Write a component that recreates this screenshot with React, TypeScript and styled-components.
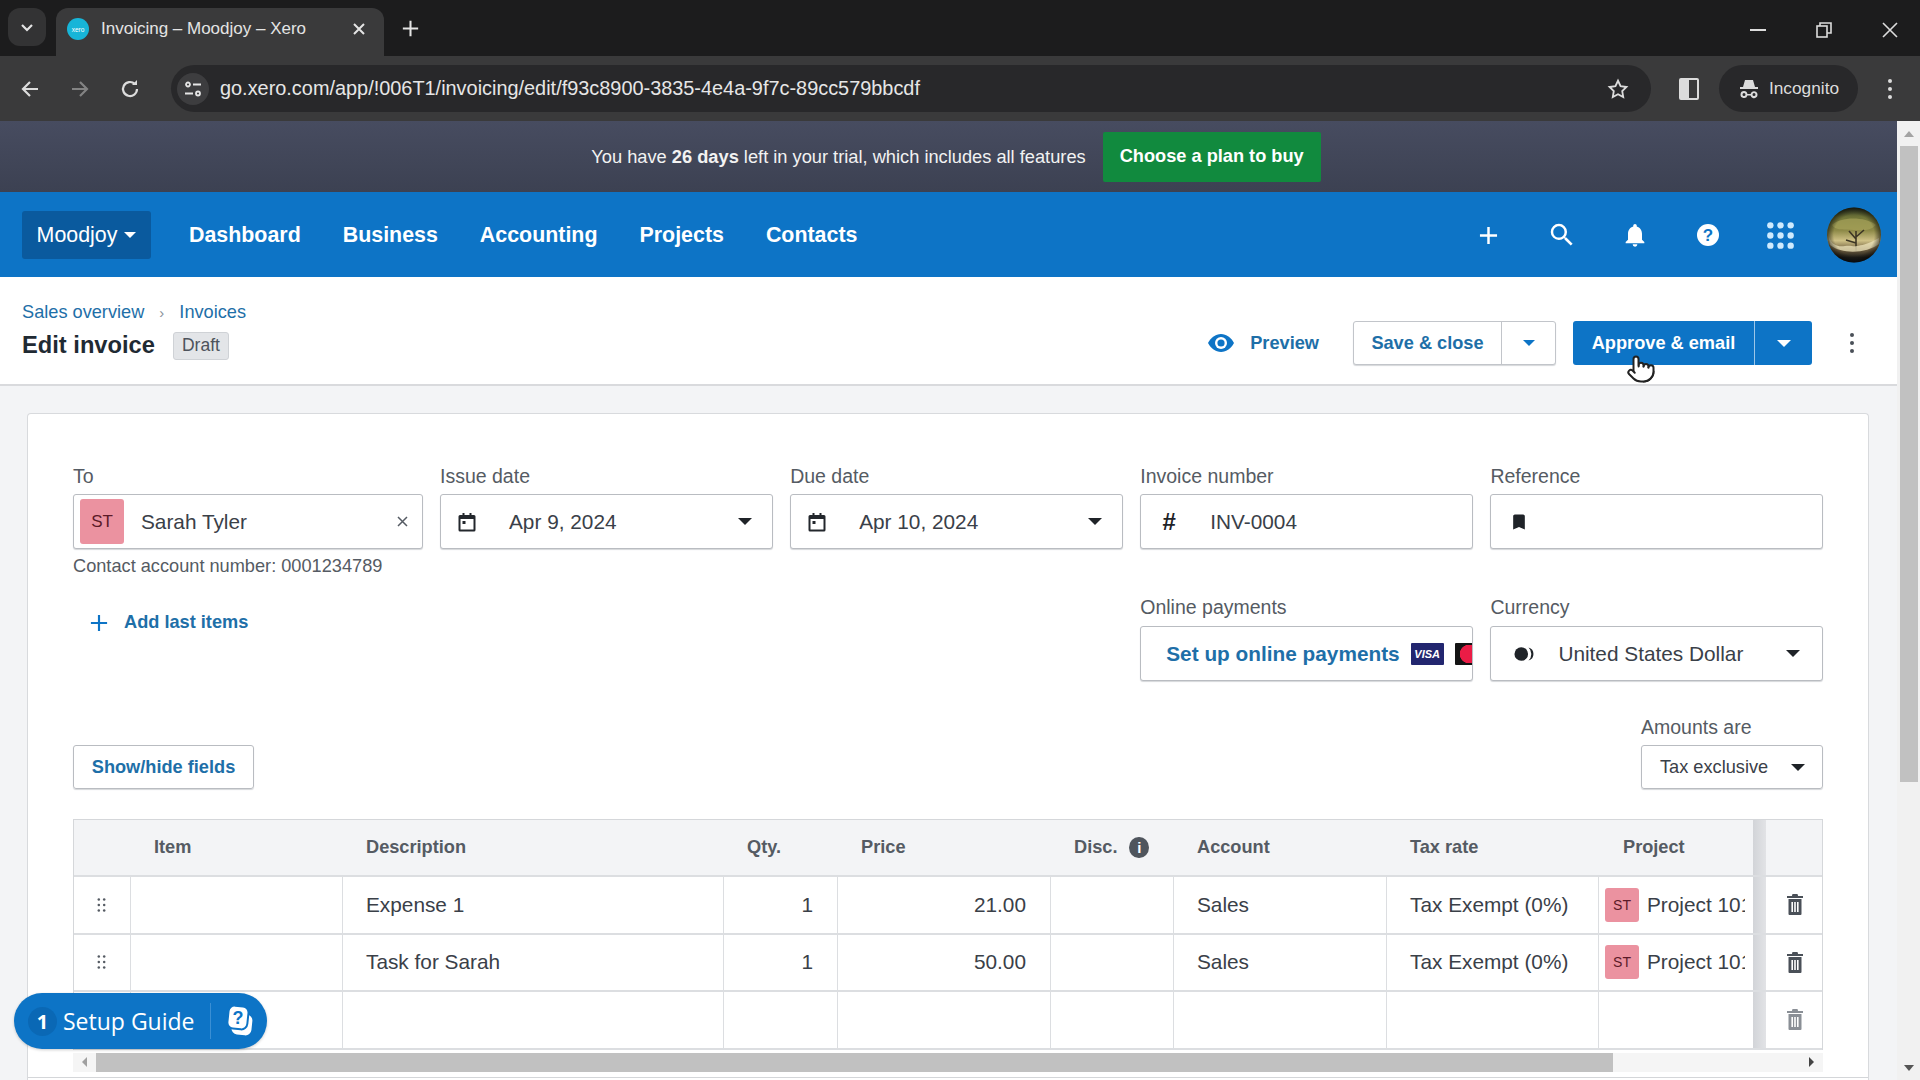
import React from "react";
import styled, { createGlobalStyle, css } from "styled-components";
import { Pointer } from "lucide-react";
import { MdBookmark, MdNotifications, MdSearch } from "react-icons/md";

const blue = "#0d74c6";
const link = "#1e6fa8";
const ink = "#2c3138";
const muted = "#555b63";

const GlobalStyle = createGlobalStyle`
  html, body { margin: 0; padding: 0; height: 100%; overflow: hidden; }
  body { font-family: "Liberation Sans", Arial, sans-serif; color: ${ink}; background: #fff; }
  * { box-sizing: border-box; }
`;

const Screen = styled.div`
  position: relative;
  height: 1080px;
  display: flex;
  flex-direction: column;
  overflow: hidden;
`;

/* browser chrome */
const TabStrip = styled.div`
  height: 56px;
  flex: none;
  background: #1c1c1d;
  display: flex;
  align-items: flex-end;
  padding-left: 8px;
  color: #e4e4e4;
`;

const TabSearch = styled.div`
  width: 38px;
  height: 38px;
  margin-bottom: 10px;
  border-radius: 12px;
  background: #333334;
  display: flex;
  align-items: center;
  justify-content: center;
`;

const Tab = styled.div`
  width: 328px;
  height: 48px;
  margin-left: 10px;
  padding: 0 18px 6px 11px;
  background: #3a3a3b;
  border-radius: 12px 12px 0 0;
  display: flex;
  align-items: center;
  font-size: 17px;
`;

const Favicon = styled.span`
  width: 22px;
  height: 22px;
  border-radius: 50%;
  background: #17b5d8;
  color: #fff;
  font-size: 6.5px;
  display: flex;
  align-items: center;
  justify-content: center;
  margin-right: 12px;
  flex: none;
`;

const TabTitle = styled.span`
  flex: 1;
  white-space: nowrap;
`;

const NewTab = styled.div`
  margin: 0 0 19px 18px;
  line-height: 0;
`;

const WindowControls = styled.div`
  margin: 0 22px 18px auto;
  display: flex;
  align-items: center;
  gap: 50px;
  line-height: 0;
`;

const Toolbar = styled.div`
  height: 65px;
  flex: none;
  background: #3a3a3b;
  display: flex;
  align-items: center;
  padding: 0 20px;
  gap: 30px;
  color: #dcdcdc;
`;

const NavGlyph = styled.span<{ $dim?: boolean }>`
  line-height: 0;
  opacity: ${(p) => (p.$dim ? 0.45 : 1)};
`;

const UrlPill = styled.div`
  width: 1480px;
  height: 47px;
  margin-left: 1px;
  border-radius: 24px;
  background: #28282a;
  display: flex;
  align-items: center;
  padding: 0 22px 0 6px;
  font-size: 19.9px;
  color: #e6e6e6;
`;

const SiteChip = styled.span`
  width: 32px;
  height: 32px;
  border-radius: 50%;
  background: #3d3d3f;
  display: flex;
  align-items: center;
  justify-content: center;
  margin-right: 11px;
`;

const Url = styled.span`
  flex: 1;
`;

const SidePanel = styled.span`
  width: 20px;
  height: 22px;
  margin-left: -2px;
  border: 2px solid #dcdcdc;
  border-radius: 2px;
  background: linear-gradient(90deg, #dcdcdc 0 50%, transparent 50%);
  flex: none;
`;

const Incognito = styled.div`
  width: 139px;
  height: 47px;
  margin-left: -10px;
  border-radius: 24px;
  background: #28282a;
  display: flex;
  align-items: center;
  justify-content: center;
  gap: 9px;
  font-size: 17.3px;
  flex: none;
`;

const Kebab = styled.span<{ $color?: string }>`
  display: flex;
  flex-direction: column;
  gap: 4px;
  flex: none;
  i {
    width: 4px;
    height: 4px;
    border-radius: 50%;
    background: ${(p) => p.$color || "#dcdcdc"};
  }
`;

/* viewport */
const Viewport = styled.div`
  flex: 1;
  min-height: 0;
  display: flex;
`;

const Page = styled.div`
  flex: 1;
  min-width: 0;
  background: #f3f4f6;
  display: flex;
  flex-direction: column;
`;

const ScrollRail = styled.div`
  width: 23px;
  flex: none;
  background: #f1f1f1;
  display: flex;
  flex-direction: column;
  align-items: center;
`;

const ScrollArrow = styled.span<{ $down?: boolean }>`
  height: 25px;
  flex: none;
  display: flex;
  align-items: center;
  &::before {
    content: "";
    border-left: 5px solid transparent;
    border-right: 5px solid transparent;
    ${(p) =>
      p.$down ? "border-top: 6px solid #555;" : "border-bottom: 6px solid #a3a3a3;"}
  }
`;

const ScrollThumb = styled.div`
  width: 18px;
  height: 636px;
  background: #c1c1c1;
`;

const ScrollRest = styled.div`
  flex: 1;
`;

const TrialBar = styled.div`
  height: 71px;
  flex: none;
  background: linear-gradient(#474c60, #3c4152);
  color: #f2f2f2;
  display: flex;
  align-items: center;
  justify-content: center;
  padding-left: 15px;
  gap: 17px;
  font-size: 18.25px;
`;

const PlanButton = styled.div`
  width: 218px;
  height: 50px;
  background: #118a3e;
  border-radius: 2px;
  color: #fff;
  font-weight: 700;
  display: flex;
  align-items: center;
  justify-content: center;
  font-size: 18.2px;
`;

const TopNav = styled.nav`
  height: 85px;
  flex: none;
  padding: 1px 15px 0 22px;
  background: ${blue};
  color: #fff;
  display: flex;
  align-items: center;
`;

const OrgButton = styled.div`
  width: 129px;
  height: 48px;
  background: #0a5a9e;
  border-radius: 3px;
  display: flex;
  align-items: center;
  justify-content: center;
  gap: 7px;
  font-size: 21.4px;
  margin-right: 38px;
`;

const NavLink = styled.a`
  font-size: 21.4px;
  font-weight: 700;
  margin-right: 42px;
`;

const NavIcons = styled.div`
  margin-left: auto;
  display: flex;
  align-items: center;
`;

const NavIcon = styled.span`
  width: 73px;
  display: flex;
  justify-content: center;
  line-height: 0;
`;

const AvatarArt = styled.svg`
  width: 56px;
  height: 56px;
  margin-left: 9px;
  flex: none;
`;

const Caret = styled.span<{ $color?: string; $size?: number }>`
  display: inline-block;
  flex: none;
  border-left: ${(p) => p.$size || 7}px solid transparent;
  border-right: ${(p) => p.$size || 7}px solid transparent;
  border-top: ${(p) => p.$size || 7}px solid ${(p) => p.$color || "#1f2328"};
`;

const PageHeader = styled.header`
  height: 109px;
  flex: none;
  background: #fff;
  border-bottom: 2px solid #d9dadd;
  display: flex;
  align-items: center;
  justify-content: space-between;
  padding: 0 43px 0 22px;
`;

const Breadcrumb = styled.div`
  display: flex;
  align-items: center;
  gap: 15px;
  font-size: 18.2px;
  color: ${link};
  margin-bottom: 9px;
`;

const CrumbSep = styled.span`
  color: #8a9099;
  font-size: 15px;
`;

const TitleRow = styled.div`
  display: flex;
  align-items: center;
  gap: 18px;
`;

const Title = styled.h1`
  margin: 0;
  font-size: 23.7px;
  font-weight: 700;
  color: #1f2a33;
`;

const Badge = styled.span`
  height: 28px;
  padding: 0 8px;
  display: flex;
  align-items: center;
  background: #e3e5e8;
  border: 1px solid #cfd2d6;
  border-radius: 3px;
  font-size: 17.5px;
  color: #4d535b;
`;

const Actions = styled.div`
  align-self: flex-end;
  margin-bottom: 19px;
  display: flex;
  align-items: center;
`;

const Preview = styled.div`
  display: flex;
  align-items: center;
  gap: 16px;
  color: ${link};
  font-size: 18.2px;
  font-weight: 700;
  margin-right: 34px;
`;

const SplitButton = styled.div<{ $primary?: boolean }>`
  height: 44px;
  display: flex;
  border-radius: 3px;
  margin-right: ${(p) => (p.$primary ? 38 : 17)}px;
  font-size: 18.2px;
  font-weight: 700;
  ${(p) =>
    p.$primary
      ? css`
          background: ${blue};
          color: #fff;
        `
      : css`
          background: #fff;
          color: ${link};
          border: 1px solid #c2c5ca;
          box-shadow: 0 1px 1px #d5d7da;
        `}
`;

const SplitLabel = styled.span<{ $width: number; $light?: boolean }>`
  width: ${(p) => p.$width}px;
  display: flex;
  align-items: center;
  justify-content: center;
  border-right: 1px solid ${(p) => (p.$light ? "#9cc6e8" : "#c2c5ca")};
`;

const SplitCaret = styled.span<{ $width: number }>`
  width: ${(p) => p.$width}px;
  display: flex;
  align-items: center;
  justify-content: center;
`;

const Card = styled.section`
  flex: 1;
  min-height: 0;
  margin: 27px 28px 0 27px;
  padding: 50px 45px 0;
  background: #fff;
  border: 1px solid #d8dadd;
  border-bottom: 0;
  border-radius: 4px 4px 0 0;
`;

const FormGrid = styled.div`
  display: grid;
  grid-template-columns: 349.5px repeat(4, 1fr);
  column-gap: 17.5px;
  row-gap: 18px;
`;

const Field = styled.div`
  min-width: 0;
`;

const Label = styled.div<{ $tight?: boolean }>`
  height: 24px;
  margin-bottom: ${(p) => (p.$tight ? 6 : 7)}px;
  font-size: 19.5px;
  line-height: 24px;
  color: ${muted};
`;

const InputBox = styled.div<{ $left?: number; $right?: number }>`
  height: 55px;
  background: #fff;
  border: 1px solid #b9bcc1;
  border-radius: 3px;
  box-shadow: 0 1px 1px #d5d7da;
  display: flex;
  align-items: center;
  padding: 0 ${(p) => p.$right ?? 20}px 0 ${(p) => p.$left ?? 18}px;
  font-size: 20.8px;
  color: #3a4048;
  overflow: hidden;
`;

const Chip = styled.span<{ $small?: boolean }>`
  width: ${(p) => (p.$small ? 34 : 44)}px;
  height: ${(p) => (p.$small ? 34 : 45)}px;
  flex: none;
  border-radius: 3px;
  background: #eb92a0;
  color: #5c1a28;
  display: flex;
  align-items: center;
  justify-content: center;
  font-size: ${(p) => (p.$small ? 14 : 17)}px;
`;

const BoxIcon = styled.span<{ $gap: number }>`
  width: 20px;
  flex: none;
  margin-right: ${(p) => p.$gap}px;
  display: flex;
  justify-content: center;
  line-height: 0;
  font-size: 24px;
  font-weight: 700;
  color: #1f2328;
`;

const BoxText = styled.span<{ $gap?: number }>`
  flex: 1;
  margin-left: ${(p) => p.$gap ?? 0}px;
  white-space: nowrap;
`;

const Helper = styled.div`
  margin-top: 6px;
  font-size: 18.2px;
  line-height: 22px;
  color: ${muted};
`;

const ClearMark = styled.span`
  margin-right: 7px;
  line-height: 0;
`;

const LeftSpan = styled.div`
  grid-column: span 3;
  padding: 17px 0 0 17px;
`;

const AddItems = styled.div`
  display: inline-flex;
  align-items: center;
  gap: 16px;
  color: ${link};
  font-size: 18.2px;
  font-weight: 700;
`;

const SetupLink = styled.span`
  color: ${link};
  font-size: 20.8px;
  font-weight: 700;
  white-space: nowrap;
  margin-right: 11px;
`;

const Visa = styled.span`
  width: 33px;
  height: 22px;
  flex: none;
  background: #22266f;
  border-radius: 1px;
  color: #fff;
  font-size: 11px;
  font-weight: 700;
  font-style: italic;
  display: flex;
  align-items: center;
  justify-content: center;
  margin-right: 11px;
`;

const MasterCard = styled.span`
  width: 33px;
  height: 22px;
  flex: none;
  background: radial-gradient(circle at 14px 11px, #eb1c46 0 9px, #141414 9.5px);
  border-radius: 1px;
`;

const OptionsRow = styled.div`
  margin-top: 34px;
  display: flex;
  align-items: flex-end;
  justify-content: space-between;
`;

const GhostButton = styled.div`
  width: 181px;
  height: 44px;
  border: 1px solid #b9bcc1;
  border-radius: 3px;
  box-shadow: 0 1px 1px #d5d7da;
  display: flex;
  align-items: center;
  justify-content: center;
  color: ${link};
  font-size: 18.2px;
  font-weight: 700;
`;

const AmountsField = styled.div`
  width: 182px;
`;

const SmallSelect = styled.div`
  height: 44px;
  border: 1px solid #b9bcc1;
  border-radius: 3px;
  box-shadow: 0 1px 1px #d5d7da;
  display: flex;
  align-items: center;
  justify-content: space-between;
  padding: 0 17px 0 18px;
  font-size: 18.2px;
  color: #3a4048;
`;

const Table = styled.div`
  margin-top: 30px;
  border: 1px solid #d5d7da;
  border-bottom: 0;
`;

const Row = styled.div<{ $head?: boolean }>`
  display: grid;
  grid-template-columns: 57px 212px 381px 114px 213px 123px 213px 212px 167px 57px;
  height: ${(p) => (p.$head ? 57 : 57.5)}px;
  background: ${(p) => (p.$head ? "#f3f4f6" : "#fff")};
  border-bottom: 2px solid #dcdee1;
  font-size: ${(p) => (p.$head ? 18.2 : 20.8)}px;
  font-weight: ${(p) => (p.$head ? 700 : 400)};
  color: ${(p) => (p.$head ? muted : "#3a4048")};
`;

const Cell = styled.div<{ $right?: boolean; $open?: boolean }>`
  min-width: 0;
  display: flex;
  align-items: center;
  justify-content: ${(p) => (p.$right ? "flex-end" : "flex-start")};
  padding: 0 24px 0 23px;
  gap: 12px;
  border-right: 1px solid ${(p) => (p.$open ? "transparent" : "#dcdee1")};
  white-space: nowrap;
`;

const ProjectCell = styled(Cell)`
  position: relative;
  padding: 0 21px 0 6px;
  gap: 8px;
  border-right: 0;
  overflow: hidden;
  &::after {
    content: "";
    position: absolute;
    top: 0;
    bottom: 0;
    right: 0;
    width: 13px;
    background: linear-gradient(90deg, #d2d4d8, #e2e3e6);
  }
`;

const ProjectHead = styled(ProjectCell)`
  padding-left: 24px;
`;

const ProjectName = styled.span`
  min-width: 0;
  flex: 1;
  overflow: hidden;
`;

const IconCell = styled.div`
  display: flex;
  align-items: center;
  justify-content: center;
  line-height: 0;
`;

const InfoDot = styled.span`
  width: 21px;
  height: 21px;
  border-radius: 50%;
  background: #4f555d;
  color: #fff;
  font-size: 15px;
  font-weight: 700;
  display: flex;
  align-items: center;
  justify-content: center;
`;

const HScroll = styled.div`
  height: 19px;
  margin-top: 3px;
  background: #f5f5f5;
  display: flex;
  align-items: center;
  justify-content: space-between;
  padding: 0 9px;
`;

const HArrow = styled.span<{ $right?: boolean }>`
  border-top: 5px solid transparent;
  border-bottom: 5px solid transparent;
  ${(p) =>
    p.$right ? "border-left: 5px solid #444;" : "border-right: 5px solid #a0a0a0;"}
`;

const HThumb = styled.div`
  width: 1517px;
  height: 19px;
  margin-left: 9px;
  margin-right: auto;
  background: #c1c1c1;
`;

const FooterRule = styled.div`
  margin: 5px -45px 0;
  height: 3px;
  background: #fff;
  border-top: 1px solid #d4d6d9;
`;

const SetupGuide = styled.div`
  position: absolute;
  left: 14px;
  top: 993px;
  width: 253px;
  height: 56px;
  border-radius: 28px;
  background: ${blue};
  box-shadow: 0 1px 3px rgba(0, 0, 0, 0.2);
  color: #fff;
  display: flex;
  align-items: center;
  font-family: "Open Sans", "Liberation Sans", sans-serif;
  font-size: 23px;
  padding-left: 14px;
`;

const GuideCount = styled.span`
  width: 29px;
  height: 29px;
  border-radius: 50%;
  background: #0a68b5;
  font-weight: 700;
  font-size: 20px;
  display: flex;
  align-items: center;
  justify-content: center;
  margin-right: 6px;
`;

const GuideRule = styled.span`
  width: 1px;
  height: 36px;
  margin: 0 14px 0 15px;
  background: #3a8fd4;
`;

const Cursor = styled.span`
  position: absolute;
  left: 1626px;
  top: 354px;
  line-height: 0;
`;

const Calendar = () => (
  <svg width="18" height="20" viewBox="0 0 18 20">
    <path d="M2 3h2.5V1h2v2h5V1h2v2H16a1.5 1.5 0 0 1 1.5 1.5v13.5A1.5 1.5 0 0 1 16 19.5H2A1.5 1.5 0 0 1 .5 18V4.5A1.5 1.5 0 0 1 2 3z" fill="#23272c" />
    <rect x="2.5" y="7" width="13" height="10.5" fill="#fff" />
    <rect x="4.5" y="9" width="3" height="3" fill="#23272c" />
  </svg>
);

const Trash = ({ color = "#4a5058" }: { color?: string }) => (
  <svg width="16" height="21" viewBox="0 0 16 21" fill={color}>
    <path d="M5.5 0h5l.6 2H16v2H0V2h4.9z" />
    <path d="M1.5 5h13v15a1 1 0 0 1-1 1h-11a1 1 0 0 1-1-1zM4.4 8v10h1.6V8zm2.8 0v10h1.6V8zm2.8 0v10h1.6V8z" fillRule="evenodd" />
  </svg>
);

const Grip = () => (
  <svg width="10" height="16" viewBox="0 0 10 16" fill="#555b63">
    {[2, 8, 14].map((y) => [2, 8].map((x) => <circle key={`${x}${y}`} cx={x} cy={y} r="1.4" />))}
  </svg>
);

const Plus = ({ size, color, width = 2.4 }: { size: number; color: string; width?: number }) => (
  <svg width={size} height={size} viewBox="0 0 20 20" stroke={color} strokeWidth={width}>
    <path d="M10 1v18M1 10h18" />
  </svg>
);

const Eye = () => (
  <svg width="26" height="18" viewBox="0 0 26 18">
    <path d="M0 9C3 3.5 7.5 0 13 0s10 3.5 13 9c-3 5.500-7.500 9-13 9S3 14.500 0 9z" fill={blue} />
    <circle cx="13" cy="9" r="6" fill="#fff" />
    <circle cx="13" cy="9" r="3.600" fill={blue} />
  </svg>
);

const columns = ["Item", "Description"];
const rows = [
  { desc: "Expense 1", price: "21.00" },
  { desc: "Task for Sarah", price: "50.00" },
];

export default function App() {
  return (
    <Screen>
      <GlobalStyle />
      <TabStrip>
        <TabSearch>
          <svg width="14" height="14" viewBox="0 0 14 14" fill="none" stroke="#e4e4e4" strokeWidth="2.2">
            <path d="M2 5l5 5 5-5" />
          </svg>
        </TabSearch>
        <Tab>
          <Favicon>xero</Favicon>
          <TabTitle>Invoicing – Moodjoy – Xero</TabTitle>
          <svg width="14" height="14" viewBox="0 0 14 14" stroke="#e4e4e4" strokeWidth="2">
            <path d="M2 2l10 10M12 2L2 12" />
          </svg>
        </Tab>
        <NewTab>
          <Plus size={17} color="#e4e4e4" />
        </NewTab>
        <WindowControls>
          <svg width="16" height="2" viewBox="0 0 16 2" fill="#dcdcdc">
            <rect width="16" height="2" />
          </svg>
          <svg width="16" height="16" viewBox="0 0 16 16" fill="none" stroke="#dcdcdc" strokeWidth="1.6">
            <rect x="1" y="4" width="10" height="11" />
            <path d="M4 4V1h11v10h-4" />
          </svg>
          <svg width="16" height="16" viewBox="0 0 16 16" stroke="#dcdcdc" strokeWidth="1.6">
            <path d="M1 1l14 14M15 1L1 15" />
          </svg>
        </WindowControls>
      </TabStrip>

      <Toolbar>
        <NavGlyph>
          <svg width="20" height="20" viewBox="0 0 20 20" fill="none" stroke="#dcdcdc" strokeWidth="2.2">
            <path d="M18 10H3M10 3l-7 7 7 7" />
          </svg>
        </NavGlyph>
        <NavGlyph $dim>
          <svg width="20" height="20" viewBox="0 0 20 20" fill="none" stroke="#dcdcdc" strokeWidth="2.2">
            <path d="M2 10h15M10 3l7 7-7 7" />
          </svg>
        </NavGlyph>
        <NavGlyph>
          <svg width="20" height="20" viewBox="0 0 20 20" fill="none" stroke="#dcdcdc" strokeWidth="2.2">
            <path d="M17 10a7 7 0 1 1-2.2-5.1" />
            <path d="M17 1v5h-5" fill="#dcdcdc" stroke="none" />
          </svg>
        </NavGlyph>
        <UrlPill>
          <SiteChip>
            <svg width="18" height="18" viewBox="0 0 18 18" fill="none" stroke="#e6e6e6" strokeWidth="1.8">
              <circle cx="4" cy="4.5" r="2" />
              <path d="M9 4.5h8M1 13.5h8" />
              <circle cx="14" cy="13.5" r="2" />
            </svg>
          </SiteChip>
          <Url>go.xero.com/app/!006T1/invoicing/edit/f93c8900-3835-4e4a-9f7c-89cc579bbcdf</Url>
          <svg width="22" height="22" viewBox="0 0 24 24" fill="none" stroke="#dcdcdc" strokeWidth="2">
            <path d="M12 3l2.8 5.9 6.4.9-4.6 4.5 1.1 6.4-5.7-3-5.7 3 1.1-6.4L2.8 9.8l6.4-.9z" />
          </svg>
        </UrlPill>
        <SidePanel />
        <Incognito>
          <svg width="22" height="22" viewBox="0 0 22 22" fill="#dcdcdc">
            <path d="M7 2h8l2 7h3v2H2V9h3z" />
            <path d="M6 13a3.5 3.5 0 1 0 3.4 4.4h3.2A3.5 3.5 0 1 0 12.6 16H9.4A3.5 3.5 0 0 0 6 13zm0 2a1.5 1.5 0 1 1 0 3 1.5 1.5 0 0 1 0-3zm10 0a1.5 1.5 0 1 1 0 3 1.5 1.5 0 0 1 0-3z" />
          </svg>
          Incognito
        </Incognito>
        <Kebab>
          <i />
          <i />
          <i />
        </Kebab>
      </Toolbar>

      <Viewport>
        <Page>
          <TrialBar>
            <span>
              You have <b>26 days</b> left in your trial, which includes all features
            </span>
            <PlanButton>Choose a plan to buy</PlanButton>
          </TrialBar>

          <TopNav>
            <OrgButton>
              Moodjoy <Caret $color="#fff" $size={6} />
            </OrgButton>
            <NavLink>Dashboard</NavLink>
            <NavLink>Business</NavLink>
            <NavLink>Accounting</NavLink>
            <NavLink>Projects</NavLink>
            <NavLink>Contacts</NavLink>
            <NavIcons>
              <NavIcon>
                <Plus size={19} color="#fff" width={2.6} />
              </NavIcon>
              <NavIcon>
                <MdSearch size={30} />
              </NavIcon>
              <NavIcon>
                <MdNotifications size={28} />
              </NavIcon>
              <NavIcon>
                <svg width="24" height="24" viewBox="0 0 24 24">
                  <circle cx="12" cy="12" r="11" fill="#fff" />
                  <text x="12" y="18" textAnchor="middle" fontSize="17" fontWeight="700" fill={blue} fontFamily="Liberation Sans">
                    ?
                  </text>
                </svg>
              </NavIcon>
              <NavIcon>
                <svg width="29" height="29" viewBox="0 0 40 40" fill="#cfeafd">
                  {[6, 20, 34].map((y) =>
                    [6, 20, 34].map((x) => <circle key={`${x}-${y}`} cx={x} cy={y} r="4.4" />)
                  )}
                </svg>
              </NavIcon>
              <AvatarArt viewBox="0 0 56 56">
                <defs>
                  <clipPath id="avatar-clip">
                    <ellipse cx="28" cy="28" rx="27" ry="27.500" />
                  </clipPath>
                  <linearGradient id="avatar-sky" x1="0" y1="0" x2="0" y2="1">
                    <stop offset="0" stopColor="#2c3524" />
                    <stop offset="0.18" stopColor="#6f7438" />
                    <stop offset="0.42" stopColor="#8e8a48" />
                    <stop offset="0.6" stopColor="#cfc186" />
                    <stop offset="0.76" stopColor="#6f5e40" />
                    <stop offset="0.9" stopColor="#1f1e19" />
                    <stop offset="1" stopColor="#11181f" />
                  </linearGradient>
                  <radialGradient id="avatar-edge" cx="0.5" cy="0.5" r="0.5">
                    <stop offset="0.72" stopColor="#000" stopOpacity="0" />
                    <stop offset="1" stopColor="#000" stopOpacity="0.65" />
                  </radialGradient>
                </defs>
                <g clipPath="url(#avatar-clip)">
                  <rect width="56" height="56" fill="url(#avatar-sky)" />
                  <path d="M6 18c8-8 32-9 44 0-5 5-12 6-22 5S10 24 6 18z" fill="#a7a35a" opacity="0.7" />
                  <path d="M30 44V24M30 32l-7-8M30 30l8-7M30 36l-10-3" stroke="#3c3524" strokeWidth="1.6" fill="none" />
                  <path d="M3 30c3 9 10 10 16 9s8 1 12 0 10-1 22-8v6c-12 9-36 11-49 1z" fill="#efe6bc" opacity="0.75" />
                  <rect width="56" height="56" fill="url(#avatar-edge)" />
                </g>
              </AvatarArt>
            </NavIcons>
          </TopNav>

          <PageHeader>
            <div>
              <Breadcrumb>
                <span>Sales overview</span>
                <CrumbSep>›</CrumbSep>
                <span>Invoices</span>
              </Breadcrumb>
              <TitleRow>
                <Title>Edit invoice</Title>
                <Badge>Draft</Badge>
              </TitleRow>
            </div>
            <Actions>
              <Preview>
                <Eye />
                Preview
              </Preview>
              <SplitButton>
                <SplitLabel $width={148}>Save &amp; close</SplitLabel>
                <SplitCaret $width={53}>
                  <Caret $color={blue} $size={6} />
                </SplitCaret>
              </SplitButton>
              <SplitButton $primary>
                <SplitLabel $width={182} $light>
                  Approve &amp; email
                </SplitLabel>
                <SplitCaret $width={57}>
                  <Caret $color="#fff" $size={7} />
                </SplitCaret>
              </SplitButton>
              <Kebab $color="#4a5058">
                <i />
                <i />
                <i />
              </Kebab>
            </Actions>
          </PageHeader>

          <Card>
            <FormGrid>
              <Field>
                <Label $tight>To</Label>
                <InputBox $left={6} $right={0}>
                  <Chip>ST</Chip>
                  <BoxText $gap={17}>Sarah Tyler</BoxText>
                  <ClearMark>
                    <svg width="11" height="11" viewBox="0 0 11 11" stroke="#555b63" strokeWidth="1.5">
                      <path d="M1 1l9 9M10 1l-9 9" />
                    </svg>
                  </ClearMark>
                  <ClearMark />
                </InputBox>
                <Helper>Contact account number: 0001234789</Helper>
              </Field>
              <Field>
                <Label $tight>Issue date</Label>
                <InputBox $left={16}>
                  <BoxIcon $gap={32}>
                    <Calendar />
                  </BoxIcon>
                  <BoxText>Apr 9, 2024</BoxText>
                  <Caret />
                </InputBox>
              </Field>
              <Field>
                <Label $tight>Due date</Label>
                <InputBox $left={16}>
                  <BoxIcon $gap={32}>
                    <Calendar />
                  </BoxIcon>
                  <BoxText>Apr 10, 2024</BoxText>
                  <Caret />
                </InputBox>
              </Field>
              <Field>
                <Label $tight>Invoice number</Label>
                <InputBox>
                  <BoxIcon $gap={31}>#</BoxIcon>
                  <BoxText>INV-0004</BoxText>
                </InputBox>
              </Field>
              <Field>
                <Label $tight>Reference</Label>
                <InputBox>
                  <BoxIcon $gap={0}>
                    <MdBookmark size={24} />
                  </BoxIcon>
                </InputBox>
              </Field>

              <LeftSpan>
                <AddItems>
                  <Plus size={18} color={blue} />
                  Add last items
                </AddItems>
              </LeftSpan>
              <Field>
                <Label>Online payments</Label>
                <InputBox $left={25}>
                  <SetupLink>Set up online payments</SetupLink>
                  <Visa>VISA</Visa>
                  <MasterCard />
                </InputBox>
              </Field>
              <Field>
                <Label>Currency</Label>
                <InputBox $left={23} $right={22}>
                  <BoxIcon $gap={24}>
                    <svg width="22" height="16" viewBox="0 0 22 16" fill="#1f2328">
                      <circle cx="8" cy="8" r="7.5" />
                      <path d="M16 .8A7.5 7.5 0 0 1 16 15.2 10 10 0 0 0 16 .8z" />
                    </svg>
                  </BoxIcon>
                  <BoxText>United States Dollar</BoxText>
                  <Caret />
                </InputBox>
              </Field>
            </FormGrid>

            <OptionsRow>
              <GhostButton>Show/hide fields</GhostButton>
              <AmountsField>
                <Label $tight>Amounts are</Label>
                <SmallSelect>
                  Tax exclusive
                  <Caret />
                </SmallSelect>
              </AmountsField>
            </OptionsRow>

            <Table>
              <Row $head>
                <Cell $open />
                {columns.map((c) => (
                  <Cell key={c} $open>
                    {c}
                  </Cell>
                ))}
                <Cell $open>Qty.</Cell>
                <Cell $open>Price</Cell>
                <Cell $open>
                  Disc. <InfoDot>i</InfoDot>
                </Cell>
                <Cell $open>Account</Cell>
                <Cell $open>Tax rate</Cell>
                <ProjectHead>Project</ProjectHead>
                <Cell $open />
              </Row>
              {rows.map((r) => (
                <Row key={r.desc}>
                  <Cell>
                    <Grip />
                  </Cell>
                  <Cell />
                  <Cell>{r.desc}</Cell>
                  <Cell $right>1</Cell>
                  <Cell $right>{r.price}</Cell>
                  <Cell />
                  <Cell>Sales</Cell>
                  <Cell>Tax Exempt (0%)</Cell>
                  <ProjectCell>
                    <Chip $small>ST</Chip>
                    <ProjectName>Project 101</ProjectName>
                  </ProjectCell>
                  <IconCell>
                    <Trash />
                  </IconCell>
                </Row>
              ))}
              <Row>
                <Cell>
                  <Grip />
                </Cell>
                <Cell />
                <Cell />
                <Cell />
                <Cell />
                <Cell />
                <Cell />
                <Cell />
                <ProjectCell />
                <IconCell>
                  <Trash color="#8a8f96" />
                </IconCell>
              </Row>
            </Table>
            <HScroll>
              <HArrow />
              <HThumb />
              <HArrow $right />
            </HScroll>
            <FooterRule />
          </Card>
        </Page>
        <ScrollRail>
          <ScrollArrow />
          <ScrollThumb />
          <ScrollRest />
          <ScrollArrow $down />
        </ScrollRail>
      </Viewport>

      <SetupGuide>
        <GuideCount>1</GuideCount>
        Setup Guide
        <GuideRule />
        <svg width="30" height="34" viewBox="0 0 30 34">
          <rect x="7" y="10" width="20" height="21" rx="6" fill="#fff" transform="rotate(6 17 20)" />
          <rect x="3" y="2" width="20" height="23" rx="6" fill="#fff" stroke={blue} strokeWidth="2" transform="rotate(6 13 13)" />
          <text x="13" y="20" textAnchor="middle" fontSize="18" fontWeight="700" fill={blue} fontFamily="Liberation Sans">
            ?
          </text>
        </svg>
      </SetupGuide>

      <Cursor>
        <Pointer size={30} fill="#fff" color="#222" strokeWidth={1.6} />
      </Cursor>
    </Screen>
  );
}
